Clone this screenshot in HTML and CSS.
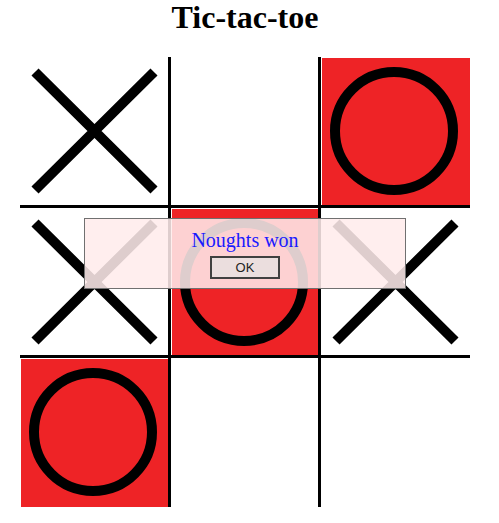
FILE: index.html
```html
<!DOCTYPE html>
<html>
<head>
<meta charset="utf-8">
<title>Tic-tac-toe</title>
<link rel="stylesheet" href="styles.css">
</head>
<body>
<div class="game">
  <h1 class="title">Tic-tac-toe</h1>
  <div class="board">
    <div class="cell"><svg viewBox="0 0 148 148"><path class="x" d="M15 15 L134 133 M134 15 L15 133"/></svg></div>
    <div class="cell"></div>
    <div class="cell win"><svg viewBox="0 0 148 148"><circle class="o" cx="73" cy="74" r="59"/></svg></div>
    <div class="cell"><svg viewBox="0 0 148 148"><path class="x" d="M15 15 L134 133 M134 15 L15 133"/></svg></div>
    <div class="cell win"><svg viewBox="0 0 148 148"><circle class="o" cx="73" cy="74" r="59"/></svg></div>
    <div class="cell"><svg viewBox="0 0 148 148"><path class="x" d="M15 15 L134 133 M134 15 L15 133"/></svg></div>
    <div class="cell win"><svg viewBox="0 0 148 148"><circle class="o" cx="73" cy="74" r="59"/></svg></div>
    <div class="cell"></div>
    <div class="cell"></div>
    <div class="dialog">
      <div class="message">Noughts won</div>
      <button class="ok">OK</button>
    </div>
  </div>
</div>
</body>
</html>
```
FILE: styles.css
```css
html, body {
  margin: 0;
  padding: 0;
  background: #fff;
}
.game {
  margin-left: 20px;
  width: 450px;
}
.title {
  margin: 0 0 23px;
  font-family: "Liberation Serif", "Times New Roman", serif;
  font-weight: bold;
  font-size: 32px;
  line-height: 34px;
  text-align: center;
  color: #000;
}
.board {
  position: relative;
  display: grid;
  grid-template-columns: 148px 147px 149px;
  grid-template-rows: 148px 147px 149px;
  gap: 3px;
  background: #000;
  width: 450px;
}
.cell {
  background: #fff;
  overflow: hidden;
}
.cell.win {
  background: #ee2326;
  box-shadow: inset 1px 1px 0 #fff;
}
.cell svg {
  display: block;
  width: 148px;
  height: 148px;
}
.x {
  stroke: #000;
  stroke-width: 10;
  fill: none;
}
.o {
  stroke: #000;
  stroke-width: 10;
  fill: none;
}
.dialog {
  position: absolute;
  left: 64px;
  top: 161px;
  width: 320px;
  padding: 10px 0 9px;
  border: 1px solid #707070;
  background: rgba(255, 235, 235, 0.87);
  display: flex;
  flex-direction: column;
  align-items: center;
}
.message {
  font-family: "Liberation Serif", "Times New Roman", serif;
  font-size: 20px;
  line-height: 23px;
  color: #1a1aff;
}
.ok {
  margin-top: 4px;
  width: 70px;
  height: 23px;
  padding: 0;
  border: 2px solid #404040;
  background: #ebdede;
  font-family: "Liberation Sans", Arial, sans-serif;
  font-size: 13px;
  color: #222;
}
```
